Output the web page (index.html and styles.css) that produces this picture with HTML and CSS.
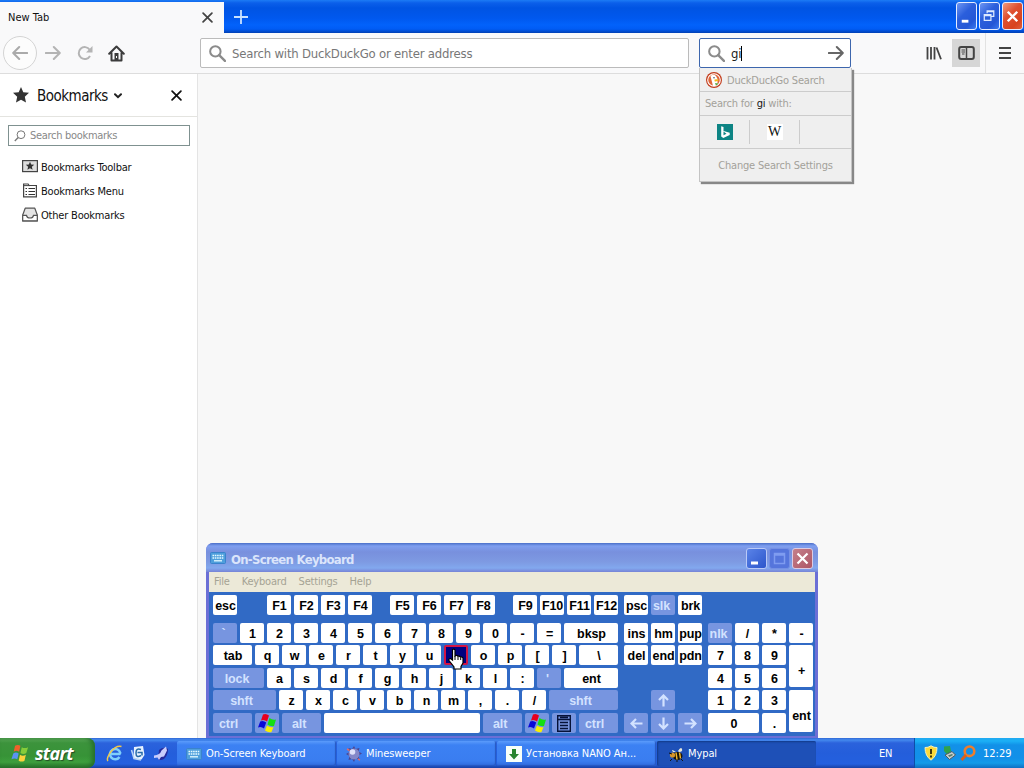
FILE: index.html
```html
<!DOCTYPE html>
<html lang="en">
<head>
    <meta charset="UTF-8">
    <meta name="viewport" content="width=device-width, initial-scale=1.0">
    <title>New Tab</title>
    <link rel="stylesheet" href="styles.css">
</head>
<body>

    <!-- Shared symbols -->
    <svg class="symbols" width="0" height="0">
        <symbol id="search" viewBox="0 0 16 16">
            <circle cx="6" cy="6" r="4.9" fill="none" stroke="currentColor" stroke-width="1.9"/>
            <path d="M9.6 9.6 15 15" stroke="currentColor" stroke-width="2.2" stroke-linecap="round"/>
        </symbol>
        <symbol id="arrow" viewBox="0 0 16 16">
            <path d="M0.8 8H14.6M8.8 2l6 6-6 6" fill="none" stroke="currentColor" stroke-width="2" stroke-linecap="round" stroke-linejoin="round"/>
        </symbol>
        <symbol id="close" viewBox="0 0 12 12">
            <path d="M1.2 1.2l9.6 9.6M10.8 1.2l-9.6 9.6" stroke="currentColor" stroke-width="1.9" stroke-linecap="round"/>
        </symbol>
        <symbol id="osk" viewBox="0 0 16 16">
            <rect x="0.5" y="2.5" width="15" height="11" rx="1" fill="#4f9fdc" stroke="#3a83cc"/>
            <path d="M2.5 5.5h11M2.5 8h11" stroke="#e6fbff" stroke-width="1.4" stroke-dasharray="1.6 0.7"/>
            <path d="M4 10.8h8" stroke="#e6fbff" stroke-width="1.3"/>
        </symbol>
        <symbol id="winkey" viewBox="0 0 20 20">
            <path d="M6 1.500q3-1.500 6 1L10 8.500q-3-2.500-6-1z" fill="#e8001c"/>
            <path d="M12.500 5q3 2.500 6.500 1.500L17 13q-3 1-6.500-1.500z" fill="#12e012"/>
            <path d="M3.200 8.500q3-1.500 6 1L7 15.500q-3-2.500-6-1z" fill="#0808d8"/>
            <path d="M10 12.500q3 2.500 6.500 1.500L14.500 19q-3 1-6.500-1.500z" fill="#f8f000"/>
        </symbol>
        <symbol id="key-arrow" viewBox="0 0 13 13">
            <path d="M0.5 6.500H11M7 2l4.500 4.500L7 11" fill="none" stroke="currentColor" stroke-width="2.200"/>
        </symbol>
    </svg>

    <div class="title-bar">
        <div class="tab">
            <span>New Tab</span>
            <svg class="tab-close" width="11" height="11"><use href="#close"/></svg>
        </div>
        <svg class="new-tab" width="14" height="14" viewBox="0 0 14 14"><path d="M7 0v14M0 7h14" stroke="#c9e2ff" stroke-width="1.8"/></svg>
        <div class="window-buttons">
            <button class="win-btn"><svg width="19" height="26" viewBox="0 0 20 26"><path d="M5 18.500h7" stroke="#fff" stroke-width="3"/></svg></button>
            <button class="win-btn"><svg width="19" height="26" viewBox="0 0 20 26"><path d="M7.500 10V7.500h7v6H12M7 8.500h8M4.500 11.500h7v6h-7zM4 12.500h8" fill="none" stroke="#dce9ff" stroke-width="1.300"/></svg></button>
            <button class="win-btn red"><svg width="19" height="26" viewBox="0 0 20 26"><path d="M5 8.500l10 10M15 8.500l-10 10" stroke="#fff" stroke-width="2.500"/></svg></button>
        </div>
    </div>

    <div class="nav-bar">
        <div class="back"><svg class="flip" width="16" height="16"><use href="#arrow"/></svg></div>
        <svg class="forward" width="16" height="16"><use href="#arrow"/></svg>
        <svg class="reload" width="16" height="16" viewBox="0 0 16 16"><path d="M13 11a6 6 0 1 1-.3-6.300" fill="none" stroke="currentColor" stroke-width="2"/><path d="M15.500 1v6.500H9z" fill="currentColor"/></svg>
        <svg class="home" width="17" height="17" viewBox="0 0 17 17"><path d="M1.200 8.800 8.500 1.500l7.300 7.300M3.500 8v7.500h10V8" fill="none" stroke="currentColor" stroke-width="2" stroke-linecap="round" stroke-linejoin="round"/><path d="M6.500 8h4v7h-4z" fill="currentColor"/><path d="M8.500 11v2" stroke="#fff"/></svg>
        <div class="url-bar">
            <svg width="17" height="17"><use href="#search"/></svg>
            <span>Search with DuckDuckGo or enter address</span>
        </div>
        <div class="search-bar">
            <svg class="lens" width="17" height="17"><use href="#search"/></svg>
            <span class="query">gi</span>
            <svg class="go" width="16" height="16"><use href="#arrow"/></svg>

            <div class="search-popup">
                <div class="engine">
                    <svg width="16" height="16" viewBox="0 0 16 16"><circle cx="8" cy="8" r="8" fill="#c23c1c"/><circle cx="8" cy="8" r="6.300" fill="#e0663a" stroke="#fff" stroke-width="1.100"/><path d="M4.500 4q3-2.500 5.500 0l1.500 3v4.500L9.500 14H7z" fill="#fff"/><path d="M8.500 7.500q3-.5 4.500.5-2 2-4.500 1.300z" fill="#f6b916"/><path d="M9 11l3.500.5-2.500 2.200z" fill="#58a846"/><circle cx="8" cy="5.800" r=".8" fill="#40506a"/></svg>
                    <span>DuckDuckGo Search</span>
                </div>
                <div class="search-for">Search for&nbsp;<b>gi</b>&nbsp;with:</div>
                <div class="one-offs">
                    <div class="one-off"><svg width="16" height="16" viewBox="0 0 16 16"><rect width="16" height="16" fill="#0d8484"/><path d="M4.200 2.200l2.300.8v4L12.700 8.800v2.200L6.300 14 4.200 12.600zM6.500 7.600v3.600l3-1.500z" fill="#fff" fill-rule="evenodd"/></svg></div>
                    <div class="one-off"><span class="wiki">W</span></div>
                </div>
                <div class="settings">Change Search Settings</div>
            </div>
        </div>
        <div class="toolbar-right">
            <svg class="library" width="16" height="16" viewBox="0 0 16 16"><path d="M1.500 2v12.500M5 2v12.500M8.500 2v12.500M10.500 2.500 15 14.200" stroke="currentColor" stroke-width="1.800"/></svg>
            <div class="sidebar-button"><svg width="17" height="16" viewBox="0 0 17 16"><rect x="1.200" y="2" width="14.600" height="12" rx="2" fill="none" stroke="currentColor" stroke-width="2"/><path d="M8.500 2v12" stroke="currentColor" stroke-width="1.500"/><path d="M3.500 5h3.500M3.500 7h3.500M4 9h2.500" stroke="currentColor"/></svg></div>
            <svg class="menu" width="14" height="14" viewBox="0 0 14 14"><path d="M1 2h12M1 7h12M1 12h12" stroke="currentColor" stroke-width="2"/></svg>
        </div>
    </div>

    <div class="browser-body">
        <div class="sidebar">
            <div class="sidebar-header">
                <svg width="16" height="16" viewBox="0 0 16 16"><path d="M8 0l2.300 5.200 5.700.6-4.200 3.900 1.200 5.900L8 12.700l-5 2.900 1.200-5.900L0 5.800l5.700-.6z" fill="#333"/></svg>
                <span>Bookmarks</span>
                <svg class="chevron" width="8" height="6" viewBox="0 0 8 6"><path d="M1 1.200l3 3 3-3" fill="none" stroke="#222" stroke-width="2" stroke-linecap="round"/></svg>
                <svg class="sidebar-close" width="11" height="11"><use href="#close"/></svg>
            </div>
            <div class="bookmark-search">
                <svg width="12" height="12" viewBox="0 0 12 12"><circle cx="7" cy="4.700" r="3.900" fill="none" stroke="#777"/><path d="M4.200 7.500.8 11" stroke="#777" stroke-width="1.300"/></svg>
                <span>Search bookmarks</span>
            </div>
            <ul class="bookmark-list">
                <li>
                    <svg width="16" height="16" viewBox="0 0 16 16"><rect x=".6" y="1.600" width="14.800" height="11" fill="#ddd" stroke="#444" stroke-width="1.200"/><path d="M8 2.800l1.200 2.700 3 .3-2.300 2 .7 3L8 9.300 5.400 10.800l.7-3-2.300-2 3-.3z" fill="#333"/></svg>
                    Bookmarks Toolbar
                </li>
                <li>
                    <svg width="16" height="16" viewBox="0 0 16 16"><path d="M1.600 1h4.500l1 1.500h7.300v11.300H1.600z" fill="#fff" stroke="#444" stroke-width="1.200"/><path d="M2 2.600h6" stroke="#444"/><path d="M3.500 5.500h1.500M3.500 8.500h1.500M3.500 11.500h1.500M6.500 5.500h6.500M6.500 8.500h6.500M6.500 11.500h6.500" stroke="#333" stroke-width="1.200"/></svg>
                    Bookmarks Menu
                </li>
                <li>
                    <svg width="16" height="16" viewBox="0 0 16 16"><path d="M.7 8 3.200 1.200h9.600l2.500 6.800v5.800H.7z" fill="#e4e4e4" stroke="#555" stroke-width="1.200" stroke-linejoin="round"/><path d="M.7 8.300H4.500q.5 2.700 3.500 2.700t3.500-2.700h3.800v5.500H.7z" fill="#fff" stroke="#555" stroke-width="1.200"/></svg>
                    Other Bookmarks
                </li>
            </ul>
        </div>
        <div class="page"></div>
    </div>

    <!-- On-Screen Keyboard window -->
    <div class="osk-window">
        <div class="osk-title">
            <svg width="16" height="16"><use href="#osk"/></svg>
            <span>On-Screen Keyboard</span>
            <div class="osk-buttons">
                <button class="osk-btn"><svg width="19" height="19" viewBox="0 0 19 19"><path d="M4 14h7" stroke="#fff" stroke-width="3"/></svg></button>
                <button class="osk-btn disabled"><svg width="19" height="19" viewBox="0 0 19 19"><path d="M4.500 4.500h10v10h-10zM4 6h11" fill="none" stroke="#7f9cf0" stroke-width="1.500"/></svg></button>
                <button class="osk-btn close"><svg width="19" height="19" viewBox="0 0 19 19"><path d="M4.500 4.500l10 10M14.500 4.500l-10 10" stroke="#fff" stroke-width="2.200"/></svg></button>
            </div>
        </div>
        <div class="osk-menu"><span>File</span><span>Keyboard</span><span>Settings</span><span>Help</span></div>
        <div class="keyboard">
            <div class="main-keys">
                <div class="row">
                    <div class="key">esc</div>
                    <div class="key f1">F1</div><div class="key">F2</div><div class="key">F3</div><div class="key">F4</div>
                    <div class="key f5">F5</div><div class="key">F6</div><div class="key">F7</div><div class="key">F8</div>
                    <div class="key f5">F9</div><div class="key">F10</div><div class="key">F11</div><div class="key">F12</div>
                </div>
                <div class="row">
                    <div class="key mod">`</div><div class="key">1</div><div class="key">2</div><div class="key">3</div><div class="key">4</div><div class="key">5</div><div class="key">6</div><div class="key">7</div><div class="key">8</div><div class="key">9</div><div class="key">0</div><div class="key">-</div><div class="key">=</div><div class="key w54">bksp</div>
                </div>
                <div class="row">
                    <div class="key w39">tab</div><div class="key">q</div><div class="key">w</div><div class="key">e</div><div class="key">r</div><div class="key">t</div><div class="key">y</div><div class="key">u</div><div class="key pressed"></div><div class="key">o</div><div class="key">p</div><div class="key">[</div><div class="key">]</div><div class="key w39">\</div>
                </div>
                <div class="row">
                    <div class="key mod w51">lock</div><div class="key">a</div><div class="key">s</div><div class="key">d</div><div class="key">f</div><div class="key">g</div><div class="key">h</div><div class="key">j</div><div class="key">k</div><div class="key">l</div><div class="key">:</div><div class="key mod">'</div><div class="key w54">ent</div>
                </div>
                <div class="row">
                    <div class="key mod w63 shift">shft</div><div class="key">z</div><div class="key">x</div><div class="key">c</div><div class="key">v</div><div class="key">b</div><div class="key">n</div><div class="key">m</div><div class="key">,</div><div class="key">.</div><div class="key">/</div><div class="key mod w69 shift">shft</div>
                </div>
                <div class="row">
                    <div class="key mod w39 left">ctrl</div>
                    <div class="key mod icon"><svg width="20" height="20"><use href="#winkey"/></svg></div>
                    <div class="key mod w39 left alt">alt</div>
                    <div class="key space"></div>
                    <div class="key mod w39 left alt">alt</div>
                    <div class="key mod icon"><svg width="20" height="20"><use href="#winkey"/></svg></div>
                    <div class="key mod icon"><svg width="14" height="17" viewBox="0 0 14 17"><path d="M.7 .7h12.600v15.600H.7zM1 4.500h12M3 2.500h8M3 7.500h8M3 10.500h8M3 13.500h8" fill="none" stroke="#061238" stroke-width="1.400"/></svg></div>
                    <div class="key mod w39 left">ctrl</div>
                </div>
            </div>
            <div class="nav-keys">
                <div class="key">psc</div><div class="key mod">slk</div><div class="key">brk</div>
                <div class="key">ins</div><div class="key">hm</div><div class="key">pup</div>
                <div class="key">del</div><div class="key">end</div><div class="key">pdn</div>
                <div class="key mod up"><svg class="rot-up" width="13" height="13"><use href="#key-arrow"/></svg></div>
                <div class="key mod arrows"><svg class="flip" width="13" height="13"><use href="#key-arrow"/></svg></div>
                <div class="key mod arrows"><svg class="rot-down" width="13" height="13"><use href="#key-arrow"/></svg></div>
                <div class="key mod arrows"><svg width="13" height="13"><use href="#key-arrow"/></svg></div>
            </div>
            <div class="num-keys">
                <div class="key mod">nlk</div><div class="key">/</div><div class="key">*</div><div class="key">-</div>
                <div class="key">7</div><div class="key">8</div><div class="key">9</div><div class="key tall">+</div>
                <div class="key">4</div><div class="key">5</div><div class="key">6</div>
                <div class="key">1</div><div class="key">2</div><div class="key">3</div><div class="key tall">ent</div>
                <div class="key zero">0</div><div class="key">.</div>
            </div>
        </div>
    </div>

    <!-- Hand cursor over the pressed key -->
    <svg class="cursor" width="17" height="22" viewBox="0 0 17 22"><path d="M4.500 1.500q1.500-1 2.500.5V8l1-.5q1.500-.3 2 .8 1.500-.6 2.500.8 1.800-.4 2.500 1V15l-2 3.500V21H6v-2L1 12.500q-.5-2 1.500-2l2 1.500z" fill="#fff" stroke="#000" stroke-width="1.200"/><path d="M7 8v4M10 8.500V12M12.700 9.500V12" stroke="#000"/></svg>

    <div class="taskbar">
        <div class="start">
            <svg width="18" height="18" viewBox="0 0 20 20"><path d="M4.500 2q3-2 6 0L9 8.500q-3-2-6 0z" fill="#f0612b"/><path d="M12 3.500q3 2 7 0l-2 6.500q-3 2-6.500 0z" fill="#85cc3a"/><path d="M2.500 10.500q3-2 6 0L7 17q-3-2-6.500 0z" fill="#5a93f2"/><path d="M10 12q3 2 6.500 0L15 18.500q-3 2-6.500 0z" fill="#fbd23c"/></svg>
            <span>start</span>
        </div>
        <div class="quick-launch">
            <svg width="17" height="17" viewBox="0 0 17 17"><path d="M13.500 12a5.200 5.200 0 1 1 .7-4.200L13.500 9H5" fill="none" stroke="#7fd0fb" stroke-width="2.500"/><path d="M2 16C-1 13 8-.5 15.500 1.500" fill="none" stroke="#f2c84b" stroke-width="1.500"/></svg>
            <svg width="16" height="16" viewBox="0 0 16 16"><path d="M4 2l9-1 1.500 9-3 4.500-8-1z" fill="#e8f2ff"/><path d="M11 4.500Q6 2.500 6 8t5 2.500M7.500 7.500h4.500v3" fill="none" stroke="#266aa8" stroke-width="1.500"/><path d="M1.500 5l2.500 8.500 7 1.500" fill="none" stroke="#b8d4f5" stroke-width="1.500"/></svg>
            <svg width="16" height="16" viewBox="0 0 16 16"><path d="M6 5q5-4 9-1 0 6-4 10-4 2-6 0z" fill="#252a9c"/><path d="M1 10.500q6-.5 7.500-5L13 1.500l1 4-3 6-3 .5-2 3-1.500-2.500-3.500.5z" fill="#c9cdfc"/></svg>
        </div>
        <div class="task"><svg width="16" height="16"><use href="#osk"/></svg><span>On-Screen Keyboard</span></div>
        <div class="task"><svg width="16" height="16" viewBox="0 0 16 16"><path d="M8 0l1.500 3 4-1-1 3.500 3.500 2-3.500 2 1 4-4-1L8 16l-2-3-3.500 1 1-4L0 8l3.500-2-1-4L6 3z" fill="#494592"/><circle cx="8" cy="8" r="5.500" fill="#8588c9"/><circle cx="6.500" cy="6" r="2.800" fill="#dfe1fa"/><path d="M1 3l2.500 1.500M12 13l2 1" stroke="#e06a6a" stroke-width="1.500"/></svg><span>Minesweeper</span></div>
        <div class="task"><svg width="16" height="16" viewBox="0 0 16 16"><rect width="16" height="16" fill="#f8fff8"/><path d="M6 3h4v5h3l-5 5.500L3 8h3z" fill="#27852e"/></svg><span>Установка NANO Ан...</span></div>
        <div class="task active"><svg width="16" height="16" viewBox="0 0 16 16"><ellipse cx="9.500" cy="10" rx="5" ry="4" fill="#181408"/><path d="M8 6.500l1 7M11.500 6.500l1 6" stroke="#f2b62c" stroke-width="1.500"/><circle cx="4.500" cy="9" r="2.600" fill="#d8962b"/><path d="M8 6Q2 2 5 6zM10 5q3-5 4-2t-3 3z" fill="#e7e7da"/><path d="M4 13l-2 2M9 14v2M13 13l2 2M1 7l3 1" stroke="#111"/></svg><span>Mypal</span></div>
        <div class="lang">EN</div>
        <div class="tray">
            <svg width="14" height="16" viewBox="0 0 14 16"><path d="M7 .8q3 2 6 1.700 0 8.500-6 12.700Q1 11 1 2.500q3 .3 6-1.700z" fill="#fbd93b" stroke="#f5f0bb"/><path d="M7 4v5M7 10.500v2" stroke="#30270a" stroke-width="1.800"/></svg>
            <svg width="16" height="16" viewBox="0 0 16 16"><path d="M3 1.500l6-.5 1 5-3.500 4L3 6z" fill="#2fa24b"/><path d="M4 10l7-3.500 3.500 3.500-6 4.500z" fill="#c5cdcd" stroke="#4c5b63"/><path d="M7 10.500l4-1.500 1 1-3.500 2z" fill="#557a68"/></svg>
            <svg width="16" height="16" viewBox="0 0 16 16"><circle cx="9.500" cy="6.300" r="4.800" fill="none" stroke="#ef7d2b" stroke-width="2.600"/><path d="M6 10 1.500 15" stroke="#d9601d" stroke-width="3"/></svg>
            <span>12:29</span>
        </div>
    </div>

</body>
</html>
```
FILE: styles.css
```css
html, body {
    height: 100%;
    margin: 0;
    overflow: hidden;
}

body {
    display: flex;
    flex-direction: column;
    font-family: "DejaVu Sans Condensed", "DejaVu Sans", sans-serif;
    font-size: 11px;
    letter-spacing: -0.2px;
    color: #111;
    background: #f8f8f8;
}

svg {
    display: block;
    flex: none;
}

span {
    white-space: nowrap;
}

button {
    padding: 0;
    box-sizing: border-box;
}

.symbols {
    position: absolute;
}

.flip {
    transform: rotate(180deg);
}

.rot-up {
    transform: rotate(-90deg);
}

.rot-down {
    transform: rotate(90deg);
}

/* Title bar */
.title-bar {
    display: flex;
    align-items: center;
    flex: none;
    height: 33px;
    background: linear-gradient(#1c7bf5 0, #0b5fea 3px, #0054e3 8px, #0058ee 18px, #0262fb 25px, #005cf5 29px, #0140b4 33px);
}

.tab {
    display: flex;
    align-items: center;
    justify-content: space-between;
    box-sizing: border-box;
    width: 224px;
    height: 31px;
    margin-top: 2px;
    padding: 0 11px 1px 8px;
    background: #f9f9fa;
    letter-spacing: 0;
}

.tab-close {
    color: #444;
}

.new-tab {
    margin-left: 10px;
}

.window-buttons {
    display: flex;
    gap: 2px;
    margin: -2px 1px 0 auto;
}

.win-btn {
    width: 21px;
    height: 28px;
    border: 1px solid #e5edff;
    border-radius: 3px;
    background: linear-gradient(135deg, #6d96f3, #2b5fdc 40%, #2457d6 75%, #3b7bf0);
}

.win-btn.red {
    background: linear-gradient(135deg, #f09a7e, #df5030 40%, #d8431f 75%, #e0603c);
}

/* Navigation */
.nav-bar {
    display: flex;
    align-items: center;
    flex: none;
    box-sizing: border-box;
    height: 41px;
    padding-left: 3px;
    background: #f9f9fa;
    border-bottom: 1px solid #ddd;
}

.back {
    display: flex;
    align-items: center;
    justify-content: center;
    width: 32px;
    height: 32px;
    border: 1px solid #d4d4d4;
    border-radius: 50%;
    background: #fcfcfc;
    color: #aaa;
}

.forward, .reload {
    margin-left: 8px;
    color: #b4b4b4;
}

.reload {
    margin-left: 16px;
}

.home {
    margin-left: 15px;
    color: #3c3c3c;
}

.url-bar, .search-bar {
    display: flex;
    align-items: center;
    box-sizing: border-box;
    height: 30px;
    border: 1px solid #bbb;
    border-radius: 2px;
    background: #fff;
    font-size: 13px;
    color: #777;
}

.url-bar {
    width: 489px;
    margin-left: 75px;
    padding-left: 8px;
    gap: 6px;
}

.url-bar svg, .search-bar .lens {
    color: #8b8b8b;
}

.search-bar {
    position: relative;
    width: 152px;
    margin-left: 10px;
    padding: 0 6px 0 8px;
    border-color: #3d66ad;
}

.query {
    margin-left: 6px;
    color: #222;
    border-right: 1px solid #000;
}

.go {
    margin-left: auto;
    color: #666;
}

.search-popup {
    position: absolute;
    z-index: 1;
    top: 29px;
    left: -1px;
    width: 151px;
    border: 1px solid #c4c4c4;
    border-top: 0;
    background: #efefef;
    box-shadow: 2px 2px 1px #888;
    font-size: 11px;
    color: #a3a19a;
}

.engine {
    display: flex;
    align-items: center;
    gap: 5px;
    height: 23px;
    padding-left: 6px;
    border-bottom: 1px solid #ccc;
}

.engine span {
    margin-top: 2px;
}

.search-for {
    height: 23px;
    padding-left: 5px;
    line-height: 24px;
    border-bottom: 1px solid #ccc;
}

.search-for b {
    font-weight: normal;
    color: #111;
}

.one-offs {
    display: flex;
    align-items: center;
    height: 32px;
    border-bottom: 1px solid #ccc;
}

.one-off {
    display: flex;
    align-items: center;
    justify-content: center;
    width: 49px;
    height: 24px;
    border-right: 1px solid #ccc;
}

.wiki {
    width: 16px;
    background: #fff;
    color: #111;
    font: 14px/16px "Liberation Serif", serif;
    text-align: center;
}

.settings {
    height: 32px;
    line-height: 33px;
    text-align: center;
}

.toolbar-right {
    display: flex;
    align-items: center;
    margin-left: auto;
    height: 40px;
    color: #444;
}

.sidebar-button {
    display: flex;
    align-items: center;
    justify-content: center;
    width: 28px;
    height: 28px;
    margin: 0 5px 0 10px;
    background: #d6d6d6;
}

.menu {
    padding: 13px 12px 13px 12px;
    border-left: 1px solid #e2e2e2;
}

/* Sidebar */
.browser-body {
    display: flex;
    flex: 1;
}

.sidebar {
    width: 197px;
    background: #fff;
    border-right: 1px solid #e4e4e4;
}

.sidebar-header {
    display: flex;
    align-items: center;
    height: 42px;
    padding: 0 15px 0 13px;
    border-bottom: 1px solid #e4e4e0;
    font-size: 15px;
    letter-spacing: -0.5px;
}

.sidebar-header span {
    margin: 2px 0 0 8px;
}

.chevron {
    margin: 2px 0 0 6px;
}

.sidebar-close {
    margin-left: auto;
}

.bookmark-search {
    display: flex;
    align-items: center;
    gap: 4px;
    box-sizing: border-box;
    width: 182px;
    height: 21px;
    margin: 8px 0 0 8px;
    padding-left: 5px;
    border: 1px solid #7f9190;
    color: #888;
    letter-spacing: -0.3px;
}

.bookmark-list {
    margin: 9px 0 0;
    padding: 0 0 0 22px;
    list-style: none;
}

.bookmark-list li {
    display: flex;
    align-items: center;
    gap: 3px;
    height: 24px;
}

/* On-Screen Keyboard */
.osk-window {
    position: absolute;
    top: 543px;
    left: 206px;
    box-sizing: border-box;
    width: 612px;
    height: 195px;
    padding: 0 3px 2px;
    border-radius: 7px 7px 0 0;
    background: #6b6fd6;
}

.osk-title {
    display: flex;
    align-items: center;
    height: 29px;
    margin: 0 -3px;
    padding: 0 5px 0 4px;
    border-radius: 7px 7px 0 0;
    background: linear-gradient(#4a6fc8 0, #7f9ff0 3px, #7890dd 9px, #7e9ae2 19px, #82a8ee 25px, #7683d6 29px);
    color: #dbe5fb;
    font-size: 13px;
    font-weight: bold;
    letter-spacing: -0.7px;
}

.osk-title span {
    margin: 3px 0 0 5px;
}

.osk-buttons {
    display: flex;
    gap: 2px;
    margin: 2px 0 0 auto;
}

.osk-btn {
    width: 21px;
    height: 21px;
    border: 1px solid #b9c9f7;
    border-radius: 3px;
    background: linear-gradient(135deg, #5a83e8, #2c56cb);
}

.osk-btn.disabled {
    border-color: #7590e4;
    background: #5575dc;
}

.osk-btn.close {
    border-color: #dccbe2;
    background: linear-gradient(135deg, #c5808b, #ad5666);
}

.osk-menu {
    display: flex;
    gap: 12px;
    height: 20px;
    padding-left: 5px;
    line-height: 19px;
    background: #ece9d8;
    color: #a5a394;
}

.keyboard {
    display: flex;
    gap: 6px;
    height: 141px;
    padding: 3px 4px 0;
    background: #316ac5;
    font: bold 12.5px "Liberation Sans", sans-serif;
    letter-spacing: -0.1px;
    color: #000;
}

.main-keys, .nav-keys, .num-keys {
    display: grid;
    grid-template-rows: 28px 22px 23px 22px 23px 20px;
}

.row {
    display: flex;
    gap: 3px;
}

.nav-keys {
    grid-template-columns: repeat(3, 24px);
    column-gap: 3px;
}

.num-keys {
    grid-template-columns: repeat(4, 24px);
    grid-template-rows: 22px 23px 22px 23px 20px;
    column-gap: 3px;
    padding-top: 28px;
}

.key {
    display: flex;
    align-items: center;
    justify-content: center;
    box-sizing: border-box;
    width: 24px;
    height: 20px;
    padding: 1px 0 0 1px;
    border-radius: 2px;
    background: #fff;
}

.key.mod {
    padding-left: 0;
    padding-right: 3px;
    background: #7795e0;
    color: #d3e2ff;
}

.key.mod.icon, .key.mod.up, .key.mod.arrows {
    padding: 0;
}

.key.mod.shift {
    padding-right: 6px;
}

.key.pressed {
    border: 2px solid #d31445;
    background: #000080;
}

.key.mod.left {
    justify-content: flex-start;
    padding-left: 6px;
}

.key.mod.alt {
    padding-left: 10px;
}

.f1 {
    margin-left: 27px;
}

.f5 {
    margin-left: 15px;
}

.key.w39 {
    width: 39px;
}

.key.w51 {
    width: 51px;
}

.key.w54 {
    width: 54px;
}

.key.w63 {
    width: 63px;
}

.key.w69 {
    width: 69px;
}

.key.space {
    width: 156px;
}

.key.tall {
    grid-row: span 2;
    height: 42px;
    padding-top: 10px;
}

.key.zero {
    grid-column: span 2;
    width: 51px;
}

.key.up {
    grid-area: 5 / 2;
}

.key.arrows {
    grid-row: 6;
}

.cursor {
    position: absolute;
    top: 648px;
    left: 448px;
}

/* Taskbar */
.taskbar {
    display: flex;
    flex: none;
    height: 30px;
    background: linear-gradient(#3168d5 0, #4489ee 2px, #2b62dc 5px, #245edb 15px, #2460df 26px, #1941a5 30px);
    color: #fff;
}

.start {
    display: flex;
    align-items: center;
    gap: 6px;
    box-sizing: border-box;
    width: 95px;
    padding-left: 11px;
    border-radius: 0 8px 8px 0;
    background: linear-gradient(#5faf5d 0, #3c933c 5px, #379337 18px, #3d9e3d 24px, #26702a 30px);
    box-shadow: inset -3px 0 4px #27702b;
    font: italic bold 18px "Open Sans", sans-serif;
    letter-spacing: -0.7px;
    text-shadow: 1px 1px 1px #244c24;
}

.start span {
    padding-bottom: 1px;
}

.quick-launch {
    display: flex;
    align-items: center;
    gap: 7px;
    width: 71px;
    padding-left: 11px;
}

.task {
    display: flex;
    align-items: center;
    gap: 4px;
    box-sizing: border-box;
    width: 159px;
    height: 25px;
    margin: 3px 1px 0 0;
    padding-left: 9px;
    border-radius: 2px;
    background: linear-gradient(#5b9bfb 0, #3c81f3 4px, #3a7df0 20px, #2f69dc 25px);
    box-shadow: inset -1px -1px 1px #2758c0;
}

.task span {
    letter-spacing: -0.1px;
}

.task.active {
    padding-left: 11px;
    background: #1e50b7;
    box-shadow: inset 1px 1px 2px #123a87;
}

.lang {
    width: 97px;
    box-sizing: border-box;
    padding-left: 62px;
    line-height: 32px;
}

.tray {
    display: flex;
    align-items: center;
    flex: 1;
    gap: 3px;
    padding-left: 9px;
    border-left: 1px solid #0d4ea8;
    background: linear-gradient(#21a9f0 0, #1bb0f6 3px, #1291e8 7px, #1290e9 20px, #149be8 25px, #0f6fc2 30px);
}

.tray span {
    margin-left: 4px;
    letter-spacing: 0;
}
```
